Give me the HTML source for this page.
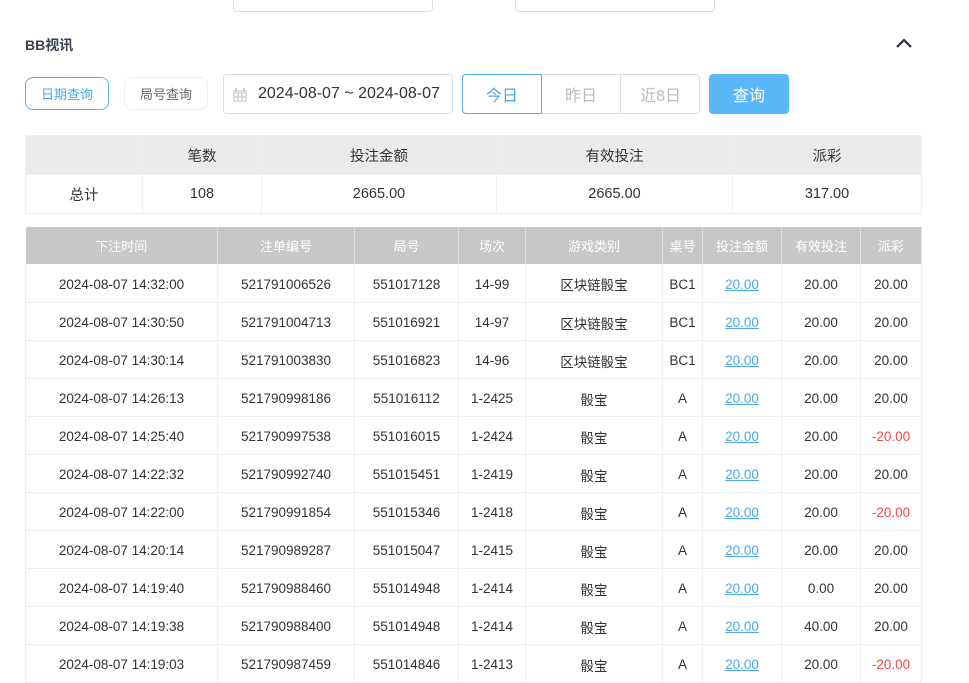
<!DOCTYPE html>
<html><head><meta charset="utf-8"><style>
*{margin:0;padding:0;box-sizing:border-box}
body{width:969px;height:675px;overflow:hidden;background:#fff;font-family:"Liberation Sans","Noto Sans CJK SC",sans-serif;color:#333;position:relative}
.a{position:absolute}
.box{border:1px solid #dcdfe6;border-radius:4px}
.btn{display:flex;align-items:center;justify-content:center;font-size:13px}
table{border-collapse:collapse;position:absolute;table-layout:fixed}
td,th{text-align:center;font-size:14px;font-weight:normal}
.s td{border:1px solid #ebeef5;height:39px;font-size:14.5px}
.s tr:first-child td{background:#ebebeb}
.m th{background:#c8c8c8;color:#fff;height:37px;border-right:1px solid #e0e0e0;font-size:13px}
.m td{height:38px;border-bottom:1px solid #ebeef5;border-right:1px solid #ebeef5;font-size:13.5px;padding-top:3px}
.m td:first-child{border-left:1px solid #ebeef5}
.l{color:#4aa8e8;text-decoration:underline}
.r{color:#f04848}
</style></head><body>
<div class="a box" style="left:233px;top:-10px;width:200px;height:22px"></div>
<div class="a box" style="left:515px;top:-10px;width:200px;height:22px"></div>
<div class="a" style="left:25px;top:35px;font-size:14px;font-weight:bold;color:#3a4250">BB视讯</div>
<svg class="a" style="left:895px;top:37px" width="18" height="12"><path d="M2 10L9 3L16 10" stroke="#2b3340" stroke-width="2.2" fill="none"/></svg>
<div class="a btn" style="left:25px;top:77px;width:84px;height:33px;border:1px solid #5aaee8;border-radius:8px;color:#4aa8e8">日期查询</div>
<div class="a btn" style="left:124px;top:77px;width:84px;height:33px;border:1px solid #eee;border-radius:8px;color:#666">局号查询</div>
<div class="a box" style="left:223px;top:74px;width:230px;height:40px"></div>
<svg class="a" style="left:232px;top:87px" width="16" height="16"><rect x="1" y="3" width="14" height="12" fill="#ddd"/><rect x="3" y="1" width="2" height="4" fill="#ccc"/><rect x="11" y="1" width="2" height="4" fill="#ccc"/><g fill="#fff"><rect x="3" y="7" width="2" height="2"/><rect x="7" y="7" width="2" height="2"/><rect x="11" y="7" width="2" height="2"/><rect x="3" y="11" width="2" height="2"/><rect x="7" y="11" width="2" height="2"/><rect x="11" y="11" width="2" height="2"/></g></svg>
<div class="a" style="left:258px;top:85px;font-size:16px;color:#333">2024-08-07 ~ 2024-08-07</div>
<div class="a box" style="left:462px;top:74px;width:238px;height:40px"></div>
<div class="a btn" style="left:462px;top:74px;width:80px;height:40px;border:1px solid #5aaee8;border-radius:4px 0 0 4px;color:#4aa8e8;font-size:16px">今日</div>
<div class="a btn" style="left:542px;top:74px;width:79px;height:40px;border-right:1px solid #dcdfe6;color:#bbb;font-size:16px">昨日</div>
<div class="a btn" style="left:621px;top:74px;width:79px;height:40px;color:#bbb;font-size:16px">近8日</div>
<div class="a btn" style="left:709px;top:74px;width:80px;height:40px;background:#5bb8f8;border-radius:4px;color:#fff;font-size:16px">查询</div>
<table class="s" style="left:25px;top:135px;width:896px">
<colgroup><col style="width:117px"><col style="width:119px"><col style="width:235px"><col style="width:236px"><col style="width:189px"></colgroup>
<tr><td></td><td>笔数</td><td>投注金额</td><td>有效投注</td><td>派彩</td></tr>
<tr><td>总计</td><td>108</td><td>2665.00</td><td>2665.00</td><td>317.00</td></tr>
</table>
<table class="m" style="left:25px;top:227px;width:896px">
<colgroup><col style="width:192px"><col style="width:137px"><col style="width:104px"><col style="width:67px"><col style="width:137px"><col style="width:40px"><col style="width:79px"><col style="width:79px"><col style="width:61px"></colgroup>
<tr><th>下注时间</th><th>注单编号</th><th>局号</th><th>场次</th><th>游戏类别</th><th>桌号</th><th>投注金额</th><th>有效投注</th><th>派彩</th></tr>
<tr><td>2024-08-07 14:32:00</td><td>521791006526</td><td>551017128</td><td>14-99</td><td>区块链骰宝</td><td>BC1</td><td class="l">20.00</td><td>20.00</td><td>20.00</td></tr>
<tr><td>2024-08-07 14:30:50</td><td>521791004713</td><td>551016921</td><td>14-97</td><td>区块链骰宝</td><td>BC1</td><td class="l">20.00</td><td>20.00</td><td>20.00</td></tr>
<tr><td>2024-08-07 14:30:14</td><td>521791003830</td><td>551016823</td><td>14-96</td><td>区块链骰宝</td><td>BC1</td><td class="l">20.00</td><td>20.00</td><td>20.00</td></tr>
<tr><td>2024-08-07 14:26:13</td><td>521790998186</td><td>551016112</td><td>1-2425</td><td>骰宝</td><td>A</td><td class="l">20.00</td><td>20.00</td><td>20.00</td></tr>
<tr><td>2024-08-07 14:25:40</td><td>521790997538</td><td>551016015</td><td>1-2424</td><td>骰宝</td><td>A</td><td class="l">20.00</td><td>20.00</td><td class="r">-20.00</td></tr>
<tr><td>2024-08-07 14:22:32</td><td>521790992740</td><td>551015451</td><td>1-2419</td><td>骰宝</td><td>A</td><td class="l">20.00</td><td>20.00</td><td>20.00</td></tr>
<tr><td>2024-08-07 14:22:00</td><td>521790991854</td><td>551015346</td><td>1-2418</td><td>骰宝</td><td>A</td><td class="l">20.00</td><td>20.00</td><td class="r">-20.00</td></tr>
<tr><td>2024-08-07 14:20:14</td><td>521790989287</td><td>551015047</td><td>1-2415</td><td>骰宝</td><td>A</td><td class="l">20.00</td><td>20.00</td><td>20.00</td></tr>
<tr><td>2024-08-07 14:19:40</td><td>521790988460</td><td>551014948</td><td>1-2414</td><td>骰宝</td><td>A</td><td class="l">20.00</td><td>0.00</td><td>20.00</td></tr>
<tr><td>2024-08-07 14:19:38</td><td>521790988400</td><td>551014948</td><td>1-2414</td><td>骰宝</td><td>A</td><td class="l">20.00</td><td>40.00</td><td>20.00</td></tr>
<tr><td>2024-08-07 14:19:03</td><td>521790987459</td><td>551014846</td><td>1-2413</td><td>骰宝</td><td>A</td><td class="l">20.00</td><td>20.00</td><td class="r">-20.00</td></tr>
</table>
</body></html>
